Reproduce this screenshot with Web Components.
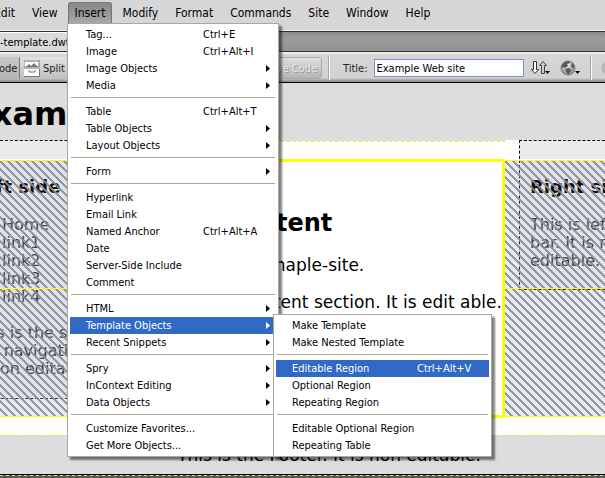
<!DOCTYPE html>
<html lang="en">
<head>
<meta charset="utf-8">
<title>Template editor</title>
<style>
html, body { margin: 0; height: 100%; }
body {
  --ui: "DejaVu Sans Condensed", "DejaVu Sans", sans-serif;
  --page: "DejaVu Sans", sans-serif;
  --yellow: #ff0;
  font: 11px/17px var(--ui);
  color: #000;
  overflow: hidden;
}
</style>
</head>
<body>
<editor-app></editor-app>
<script>
const define = (name, html, setup) => {
  const tpl = document.createElement('template');
  tpl.innerHTML = html;
  customElements.define(name, class extends HTMLElement {
    constructor() {
      super();
      this.attachShadow({ mode: 'open' }).append(tpl.content.cloneNode(true));
    }
    connectedCallback() { if (setup) setup(this, this.shadowRoot); }
  });
};

/* ---------- menus ---------- */
define('menu-item', `
<style>
:host { display: block; }
button { display: flex; align-items: center; width: 100%; height: 17px; margin: 0; padding: 0 6px 0 16px;
  border: 0; background: none; font: inherit; color: inherit; text-align: left; white-space: nowrap; }
.label { flex: 1; }
.key { flex: 0 0 var(--key, 67px); }
.key:empty { display: none; }
svg { display: none; width: 4px; height: 7px; fill: currentColor; }
:host([sub]) svg { display: block; }
:host([active]) button { background: #316ac5; color: #fff; }
</style>
<button type="button" role="menuitem"><span class="label"><slot></slot></span><span class="key"></span>
<svg viewBox="0 0 4 7"><path d="M0 0L4 3.500L0 7z"/></svg></button>`,
(el, root) => { root.querySelector('.key').textContent = el.getAttribute('key') || ''; });

define('menu-rule', `
<style>
:host { display: block; height: 9px; padding: 3px 1px 0; box-sizing: border-box; }
hr { margin: 0; border: 0; border-top: 1px solid #aca899; }
</style><hr>`);

define('popup-menu', `
<style>
:host { display: block; box-sizing: border-box; padding: 2px; background: #fff; border: 1px solid #aca899;
  box-shadow: 3px 3px 2px rgba(0,0,0,.5); }
</style><div role="menu"><slot></slot></div>`);

define('menu-bar', `
<style>
:host { display: block; height: 31px; background: #d6d6d6; border-bottom: 1px solid #eee; box-sizing: border-box; overflow: hidden; }
nav { display: flex; gap: 1px; padding-top: 2px; margin-left: -14px; font: 12px/20px var(--ui); }
button { margin: 0; padding: 0 8px; height: 21px; border: 0; background: none; font: inherit; color: inherit; }
.open { padding: 0 6px; margin: 0 1px; border: 1px solid #777; border-bottom: 0; border-radius: 3px 3px 0 0;
  background: linear-gradient(#878787, #a8a8a8); }
</style>
<nav><button>Edit</button><button>View</button><button class="open" aria-expanded="true">Insert</button><button>Modify</button><button>Format</button><button>Commands</button><button>Site</button><button>Window</button><button>Help</button></nav>`);

/* ---------- document tabs and toolbar ---------- */
define('tab-strip', `
<style>
:host { display: flex; height: 21px; box-sizing: border-box; border-top: 1px solid #333; border-bottom: 1px solid #333;
  background: linear-gradient(#8d8d8d, #9c9c9c 30%, #929292); }
button { width: 190px; padding: 0; margin: 0; border: 0; border-top: 1px solid #fff; background: #dadada;
  font: inherit; text-align: left; color: inherit; }
</style><button type="button">-template.dwt</button>`);

define('doc-toolbar', `
<style>
:host { display: flex; align-items: center; height: 31px; box-sizing: border-box; border-top: 2px solid #efece4; overflow: hidden;
  border-bottom: 1px solid #000; background: linear-gradient(#d6d6d6, #d2d2d2 85%, #bdb9b0 90%, #8a8478); color: #222; }
button { display: flex; align-items: center; margin: 0; padding: 0; border: 0; background: none; font: inherit; color: inherit; height: 22px; flex: none; }
.views { display: flex; flex: 0 0 322px; justify-content: space-between; overflow: hidden; }
.seg { display: flex; background: linear-gradient(#c9c9c9, #b4b4b4); }
.code { width: 28px; margin-left: -8px; border-right: 1px solid #777; }
.split { width: 60px; gap: 3px; padding-left: 4px; background: linear-gradient(#e2e2e2, #bfbfbf); }
.live { padding: 0 4px 0 30px; border: 1px solid #aaa; border-radius: 3px; background: linear-gradient(#dedede, #b5b5b5);
  color: #e8e8e8; text-shadow: 1px 1px 0 #999; white-space: nowrap; }
.bar { flex: none; width: 1px; height: 24px; background: #aaa; border-right: 1px solid #f4f4f4; margin-left: 6px; }
.preview + .bar { margin-left: 9px; }
label { margin: 0 6px 0 13px; flex: none; }
input { box-sizing: border-box; width: 150px; height: 18px; flex: none; padding: 0 2px; border: 1px solid #7a92c8;
  background: #fff; font: inherit; color: #000; }
.tool { margin-left: 6px; }
.preview, .refresh { margin-left: 9px; }
</style>
<div class="views"><div class="seg"><button class="code">Code</button><button class="split">
<svg width="16" height="17" viewBox="0 0 16 17"><rect x="0" y="0" width="15" height="7" fill="#fff" stroke="#777"/><path d="M1 1h14v1H1z" fill="#aaa"/><path d="M2 7L5 4l2 2 3-3 4 4z" fill="#777"/><path d="M0 9h15v7H0z" fill="#fff"/><path d="M15.500 9v7.500H0M5 10v2h6v-2" fill="none" stroke="#777"/><path d="M0 8h16" stroke="#aaa"/></svg>Split</button></div>
<button class="live" disabled>Live Code</button></div>
<span class="bar"></span>
<label for="t">Title:</label><input id="t" value="Example Web site">
<button class="tool" aria-label="File management"><svg width="21" height="18" viewBox="0 0 21 18"><path d="M3.500 2.500h3v8h2L5 14.500 1.500 10.500h2z" fill="#fff" stroke="#333"/><path d="M11.500 14.500v-8h-2L13 2.500l3.500 4h-2v8z" fill="#ccc" stroke="#444"/><path d="M15 12h5l-2.500 3z" fill="#000"/></svg></button>
<button class="preview" aria-label="Preview in browser"><svg width="21" height="18" viewBox="0 0 21 18"><defs><radialGradient id="g" cx=".4" cy=".3"><stop offset="0" stop-color="#fff"/><stop offset="1" stop-color="#999"/></radialGradient></defs><circle cx="8" cy="9" r="7" fill="url(#g)" stroke="#777"/><path d="M2 6l3-3 4-1 1 2-3 1 1 2-3 2-1-1-2 1zM5 10l4-1 2 2-2 4-2-1zM12 4l2 2v3l-3-1z" fill="#555"/><path d="M15 12h5l-2.500 3z" fill="#000"/></svg></button>
<span class="bar"></span>
<button class="refresh" aria-label="Refresh" disabled><svg width="16" height="18" viewBox="0 0 16 18"><circle cx="8" cy="9" r="6" fill="none" stroke="#b4b4b4" stroke-width="3"/></svg></button>`);

/* ---------- page being edited ---------- */
define('locked-region', `
<style>
:host { display: block; position: relative; overflow: hidden; margin: 1px 0; background: #e6ebfb; }
.hatch { position: absolute; inset: 0; width: 100%; height: 100%; shape-rendering: crispEdges; pointer-events: none; }
.frame { position: absolute; inset: 0; border: solid #ff0; border-width: 1px 0; }
.mark { position: absolute; left: 0; right: 0; top: 128px; height: 1px; background: #ff0; }
</style>
<slot></slot>
<svg class="hatch" aria-hidden="true"><defs><pattern id="p" width="8" height="8" patternUnits="userSpaceOnUse"><path fill="#8a8a8a" fill-opacity=".85"/></pattern></defs><rect width="100%" height="100%" fill="url(#p)"/></svg>
<div class="frame"></div><div class="mark"></div>`,
(el, root) => {
  let d = '';
  for (let y = 0; y < 8; y++) for (let i = 0; i < 3; i++) d += `M${(y + 6 + i) % 8} ${y}h1v1h-1z`;
  root.querySelector('path').setAttribute('d', d);
});

define('side-bar', `
<style>
:host { display: block; box-sizing: border-box; padding: 16px 0 0 11px; background: #dfe3ef;
  font: 16px/18px var(--page); color: #3c4450; white-space: nowrap; }
::slotted(h3) { margin: 0 0 18px; font: bold 18px/22px var(--page); color: #111; }
::slotted(p) { margin: 0 0 18px; }
::slotted(ul) { margin: 0 0 18px; padding: 0 0 0 30px; list-style: none; }
</style><slot></slot>`);

define('edited-page', `
<style>
:host { display: flex; flex-direction: column; flex: 1; background: #fff; font: 17px/20px var(--page); }
header { height: 57px; box-sizing: border-box; padding-top: 11px; background: #ddd; }
h1 { margin: 0 0 0 -30px; font: bold 32px/40px var(--page); }
.cols { display: grid; grid-template-columns: 137px minmax(0, 1fr) 100px; grid-template-rows: 19px 259px; }
.dash-y { background: repeating-linear-gradient(90deg, #ee2 0 3px, transparent 3px 6px); height: 1px; }
.top { background: #ebebeb; border-top: 1px dashed #000; }
.top.mid { background: #fff; border-top: 1px solid #ddd; }
.top.r { margin-left: 14px; border-left: 1px dashed #000; }
.left-side { margin-left: -39px; height: 239px; border-bottom: 1px dashed #333; }
.right-side { margin-left: 14px; height: 130px; border: dashed #222; border-width: 0 0 1px 1px; padding-left: 10px; }
main { border: 3px solid #ff0; padding: 47px 0 0 11px; white-space: nowrap; }
h2 { margin: 0 0 17px; font: bold 24px/29px var(--page); }
main p { margin: 0 0 17px; }
footer { margin-top: 17px; height: 39px; box-sizing: border-box; background: #ddd; text-align: center; }
footer p { margin: 0; padding: 9px 0 0 53px; }
.end { border-top: 1px solid #000; background: #5a5a5a; flex: 1; }
</style>
<header><h1>Example</h1></header>
<div class="cols">
  <div class="top"></div><div class="top mid"><div class="dash-y"></div></div><div class="top r"></div>
  <locked-region><side-bar class="left-side"><h3>Left side bar</h3>
    <ul><li>Home</li><li>link1</li><li>link2</li><li>link3</li><li>link4</li></ul>
    <p>This is the side<br>bar navigation. It<br>is non editable.</p></side-bar></locked-region>
  <main><h2>Main Content</h2><p>This is the ex maple-site.</p><p>This is the content section. It is edit able.</p></main>
  <locked-region><side-bar class="right-side"><h3>Right side bar</h3><p>This is left side<br>bar. It is non<br>editable.</p></side-bar></locked-region>
</div>
<footer><div class="dash-y"></div><p>This is the Footer. It is non editable.</p></footer>
<div class="end"><div class="dash-y"></div></div>`);

define('editor-app', `
<style>
:host { display: flex; flex-direction: column; height: 100vh; min-width: 0; position: relative; overflow: hidden; }
.insert { position: absolute; left: 67px; top: 23px; width: 212px; }
.template { position: absolute; left: 273px; top: 314px; width: 219px; --key: 66px; }
</style>
<menu-bar></menu-bar>
<tab-strip></tab-strip>
<doc-toolbar></doc-toolbar>
<edited-page></edited-page>
<popup-menu class="insert">
  <menu-item key="Ctrl+E">Tag...</menu-item><menu-item key="Ctrl+Alt+I">Image</menu-item><menu-item sub>Image Objects</menu-item><menu-item sub>Media</menu-item>
  <menu-rule></menu-rule>
  <menu-item key="Ctrl+Alt+T">Table</menu-item><menu-item sub>Table Objects</menu-item><menu-item sub>Layout Objects</menu-item>
  <menu-rule></menu-rule>
  <menu-item sub>Form</menu-item>
  <menu-rule></menu-rule>
  <menu-item>Hyperlink</menu-item><menu-item>Email Link</menu-item><menu-item key="Ctrl+Alt+A">Named Anchor</menu-item><menu-item>Date</menu-item><menu-item>Server-Side Include</menu-item><menu-item>Comment</menu-item>
  <menu-rule></menu-rule>
  <menu-item sub>HTML</menu-item><menu-item sub active>Template Objects</menu-item><menu-item sub>Recent Snippets</menu-item>
  <menu-rule></menu-rule>
  <menu-item sub>Spry</menu-item><menu-item sub>InContext Editing</menu-item><menu-item sub>Data Objects</menu-item>
  <menu-rule></menu-rule>
  <menu-item>Customize Favorites...</menu-item><menu-item>Get More Objects...</menu-item>
</popup-menu>
<popup-menu class="template">
  <menu-item>Make Template</menu-item><menu-item>Make Nested Template</menu-item>
  <menu-rule></menu-rule>
  <menu-item key="Ctrl+Alt+V" active>Editable Region</menu-item><menu-item>Optional Region</menu-item><menu-item>Repeating Region</menu-item>
  <menu-rule></menu-rule>
  <menu-item>Editable Optional Region</menu-item><menu-item>Repeating Table</menu-item>
</popup-menu>`);
</script>
</body>
</html>
